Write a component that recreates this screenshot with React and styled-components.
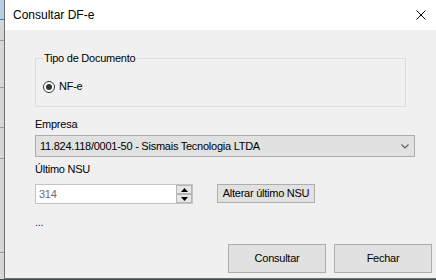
import React from "react";
import styled, { createGlobalStyle } from "styled-components";

const Global = createGlobalStyle`
  html, body { margin: 0; padding: 0; }
  body { width: 436px; height: 280px; overflow: hidden; background: #3d4f52; }
  * { box-sizing: border-box; }
`;

const Desktop = styled.div`
  display: flex;
  width: 436px;
  height: 279px;
  font-family: "Liberation Sans", Arial, sans-serif;
`;

const Strip = styled.div`
  width: 4px;
  flex: none;
  background:
    linear-gradient(to bottom,
      #b7cde4 0, #b7cde4 19px,
      #1f7fd0 19px, #1f7fd0 20px,
      #d6d6d6 20px, #d6d6d6 40px,
      #9a9a9a 40px, #9a9a9a 41px,
      #d6d6d6 41px, #d6d6d6 87px,
      #9a9a9a 87px, #9a9a9a 88px,
      #d6d6d6 88px, #d6d6d6 127px,
      #9a9a9a 127px, #9a9a9a 128px,
      #d6d6d6 128px, #d6d6d6 158px,
      #9a9a9a 158px, #9a9a9a 159px,
      #d6d6d6 159px, #d6d6d6 252px,
      #9a9a9a 252px, #9a9a9a 253px,
      #d6d6d6 253px);
`;

const Window = styled.div`
  flex: 1;
  display: flex;
  flex-direction: column;
  border-left: 1px solid #707070;
  border-bottom: 1px solid #707070;
  background: #f0f0f0;
`;

const TitleBar = styled.div`
  height: 30px;
  flex: none;
  background: #ffffff;
  display: flex;
  align-items: center;
  justify-content: space-between;
  padding: 0 10px 1px 8px;
`;

const Title = styled.span`
  font-size: 12px;
  color: #000;
  line-height: 30px;
`;

const CloseIcon = styled.svg`
  width: 10px;
  height: 10px;
  display: block;
`;

const Body = styled.div`
  flex: 1;
  display: flex;
  flex-direction: column;
  padding: 22px 0 0 30px;
  font-size: 11px;
  letter-spacing: -0.25px;
  color: #000;
  line-height: 13px;
`;

const Group = styled.fieldset`
  margin: 0;
  width: 371px;
  border: 1px solid #dcdcdc;
  padding: 15px 6px 13px 7px;
`;

const Legend = styled.legend`
  padding: 0 1px;
  margin-left: 0;
  line-height: 13px;
`;

const RadioRow = styled.label`
  display: flex;
  align-items: center;
  gap: 4px;
  height: 13px;
`;

const RadioDot = styled.span`
  width: 12px;
  height: 12px;
  border-radius: 50%;
  border: 1px solid #333;
  background: #fff;
  display: flex;
  align-items: center;
  justify-content: center;
  &::after {
    content: "";
    width: 6px;
    height: 6px;
    border-radius: 50%;
    background: #333;
  }
`;

const Label = styled.div`
  margin-top: ${(p) => p.$mt}px;
  line-height: 13px;
`;

const Select = styled.div`
  margin-top: ${(p) => p.$mt}px;
  width: 380px;
  height: 22px;
  background: #e1e1e1;
  border: 1px solid #adadad;
  display: flex;
  align-items: center;
  justify-content: space-between;
  padding: 0 5px 0 4px;
`;

const Row = styled.div`
  margin-top: ${(p) => p.$mt}px;
  display: flex;
  align-items: flex-start;
  gap: 24px;
`;

const NumberBox = styled.div`
  width: 158px;
  height: 20px;
  background: #fff;
  border: 1px solid #c4c4c4;
  display: flex;
  align-items: center;
  justify-content: space-between;
  padding: 0 0 0 3px;
  color: #6d6d6d;
`;

const Spinner = styled.div`
  display: flex;
  flex-direction: column;
`;

const SpinBtn = styled.div`
  width: 16px;
  height: 9px;
  background: #e6e6e6;
  border: 1px solid #b5b5b5;
  display: flex;
  align-items: center;
  justify-content: center;
`;

const Button = styled.div`
  width: 98px;
  height: ${(p) => p.$h}px;
  background: #e1e1e1;
  border: 1px solid #adadad;
  display: flex;
  align-items: center;
  justify-content: center;
  color: #000;
`;

const Dots = styled.div`
  margin-top: 12px;
  color: #1c1c4a;
  line-height: 13px;
`;

const Footer = styled.div`
  margin-top: 15px;
  display: flex;
  justify-content: flex-end;
  gap: 8px;
  padding-right: 4px;
`;

export default function App() {
  return (
    <>
      <Global />
      <Desktop>
        <Strip />
        <Window>
          <TitleBar>
            <Title>Consultar DF-e</Title>
            <CloseIcon viewBox="0 0 10 10">
              <path d="M0.5 0.5 L9.5 9.5 M9.5 0.5 L0.5 9.5" stroke="#000" strokeWidth="1" fill="none" />
            </CloseIcon>
          </TitleBar>
          <Body>
            <Group>
              <Legend>Tipo de Documento</Legend>
              <RadioRow>
                <RadioDot />
                NF-e
              </RadioRow>
            </Group>
            <Label $mt={11}>Empresa</Label>
            <Select $mt={4}>
              <span>11.824.118/0001-50 - Sismais Tecnologia LTDA</span>
              <svg width="8" height="5" viewBox="0 0 8 5">
                <path d="M0.5 0.5 L4 4 L7.5 0.5" stroke="#5a5a5a" strokeWidth="1.1" fill="none" />
              </svg>
            </Select>
            <Label $mt={6}>Último NSU</Label>
            <Row $mt={8}>
              <NumberBox>
                <span>314</span>
                <Spinner>
                  <SpinBtn>
                    <svg width="7" height="4" viewBox="0 0 7 4">
                      <path d="M0 4 L3.5 0 L7 4 Z" fill="#000" />
                    </svg>
                  </SpinBtn>
                  <SpinBtn>
                    <svg width="7" height="4" viewBox="0 0 7 4">
                      <path d="M0 0 L3.5 4 L7 0 Z" fill="#000" />
                    </svg>
                  </SpinBtn>
                </Spinner>
              </NumberBox>
              <Button $h={19}>Alterar último NSU</Button>
            </Row>
            <Dots>...</Dots>
            <Footer>
              <Button $h={29}>Consultar</Button>
              <Button $h={29}>Fechar</Button>
            </Footer>
          </Body>
        </Window>
      </Desktop>
    </>
  );
}
